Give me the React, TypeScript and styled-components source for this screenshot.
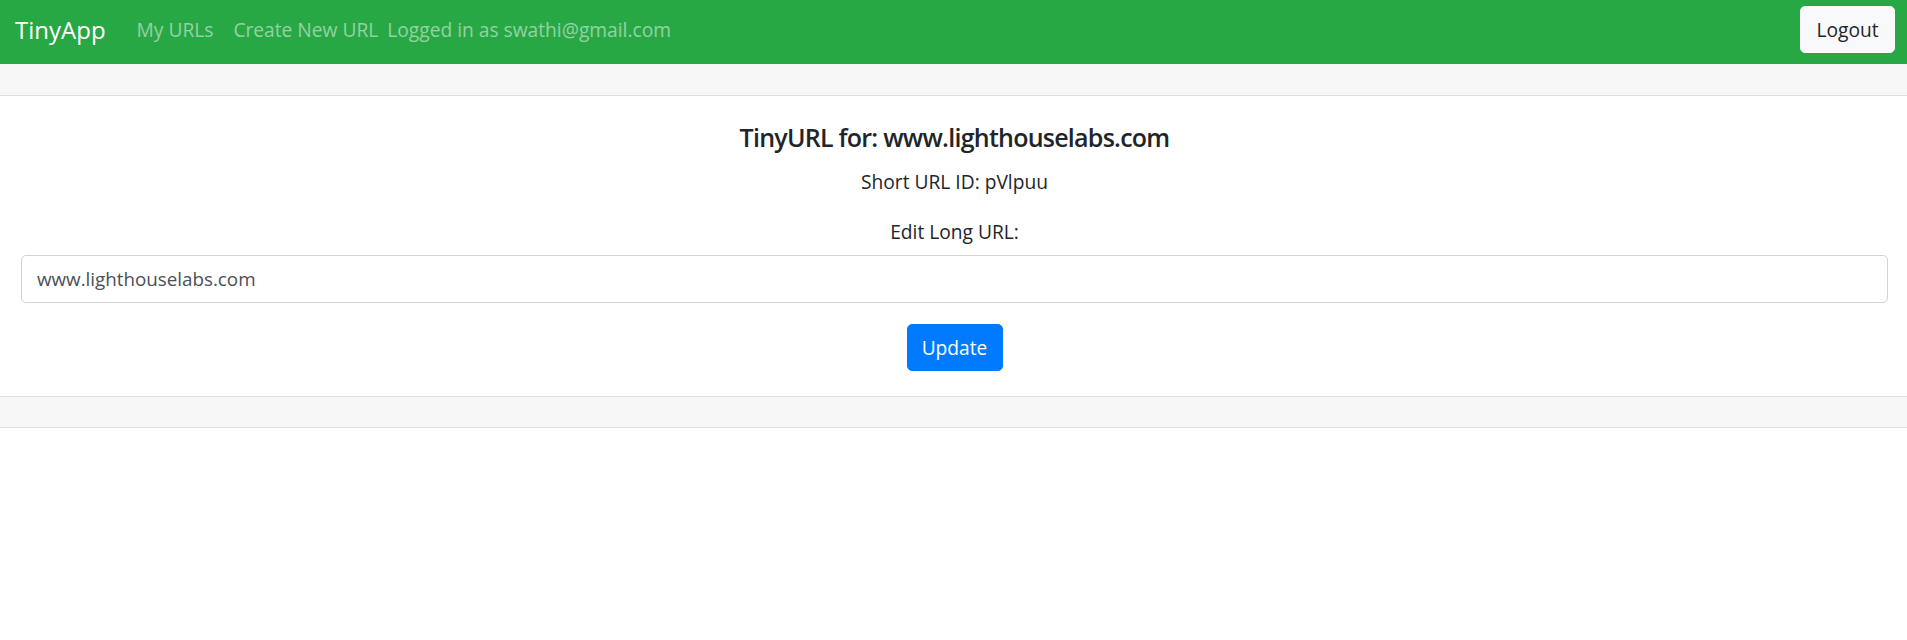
import React from "react";
import styled, { createGlobalStyle } from "styled-components";

const Global = createGlobalStyle`
  html, body { margin: 0; padding: 0; background: #fff; }
  body {
    font-family: "Open Sans", "Noto Sans", Arial, sans-serif;
    color: #212529;
  }
  * { box-sizing: border-box; }
`;

const Navbar = styled.nav`
  height: 64px;
  background: #28a745;
  display: flex;
  align-items: center;
  padding: 0 12px 0 15px;
`;

const Brand = styled.a`
  font-size: 24px;
  color: #fff;
  text-decoration: none;
  margin-right: 31px;
  line-height: 1;
  padding-bottom: 4px;
`;

const NavLinks = styled.div`
  display: flex;
  align-items: center;
  flex: 1;
`;

const NavLink = styled.a<{ $gap?: number }>`
  font-size: 19.2px;
  color: rgba(255, 255, 255, 0.5);
  text-decoration: none;
  margin-right: ${(p) => p.$gap ?? 0}px;
  line-height: 1;
  padding-bottom: 4px;
`;

const LogoutButton = styled.button`
  width: 95px;
  height: 47px;
  margin-top: -5px;
  background: #f8f9fa;
  border: 1px solid #f8f9fa;
  border-radius: 5px;
  color: #212529;
  font-family: inherit;
  font-size: 19.2px;
  padding: 0;
  cursor: pointer;
`;

const Strip = styled.div<{ $top?: boolean }>`
  background: #f7f7f7;
  height: 32px;
  border-bottom: 1px solid #dfdfdf;
  ${(p) => (p.$top ? "" : "border-top: 1px solid #dfdfdf;")}
`;

const Body = styled.section`
  height: 300px;
  display: flex;
  flex-direction: column;
  align-items: center;
  padding: 23px 19px 0 21px;
`;

const Title = styled.h4`
  margin: 0;
  font-size: 25px;
  font-weight: 600;
  line-height: 36px;
  letter-spacing: -0.75px;
`;

const Line = styled.p<{ $mt: number }>`
  margin: ${(p) => p.$mt}px 0 0;
  font-size: 19.2px;
  line-height: 29px;
`;

const Input = styled.input`
  margin-top: 9px;
  width: 100%;
  height: 48px;
  border: 1px solid #ced4da;
  border-radius: 5px;
  padding: 0 15px;
  font-family: inherit;
  font-size: 18.8px;
  color: #495057;
  outline: none;
`;

const UpdateButton = styled.button`
  margin-top: 21px;
  width: 96px;
  height: 47px;
  background: #007bff;
  border: 1px solid #007bff;
  border-radius: 5px;
  color: #fff;
  font-family: inherit;
  font-size: 19.2px;
  padding: 0;
  cursor: pointer;
`;

export default function App() {
  return (
    <>
      <Global />
      <Navbar>
        <Brand href="#">TinyApp</Brand>
        <NavLinks>
          <NavLink href="#" $gap={20}>My URLs</NavLink>
          <NavLink href="#" $gap={9}>Create New URL</NavLink>
          <NavLink as="span">Logged in as swathi@gmail.com</NavLink>
        </NavLinks>
        <LogoutButton>Logout</LogoutButton>
      </Navbar>
      <Strip $top />
      <Body>
        <Title>TinyURL for: www.lighthouselabs.com</Title>
        <Line $mt={12}>Short URL ID: pVlpuu</Line>
        <Line $mt={21}>Edit Long URL:</Line>
        <Input defaultValue="www.lighthouselabs.com" />
        <UpdateButton>Update</UpdateButton>
      </Body>
      <Strip />
    </>
  );
}
